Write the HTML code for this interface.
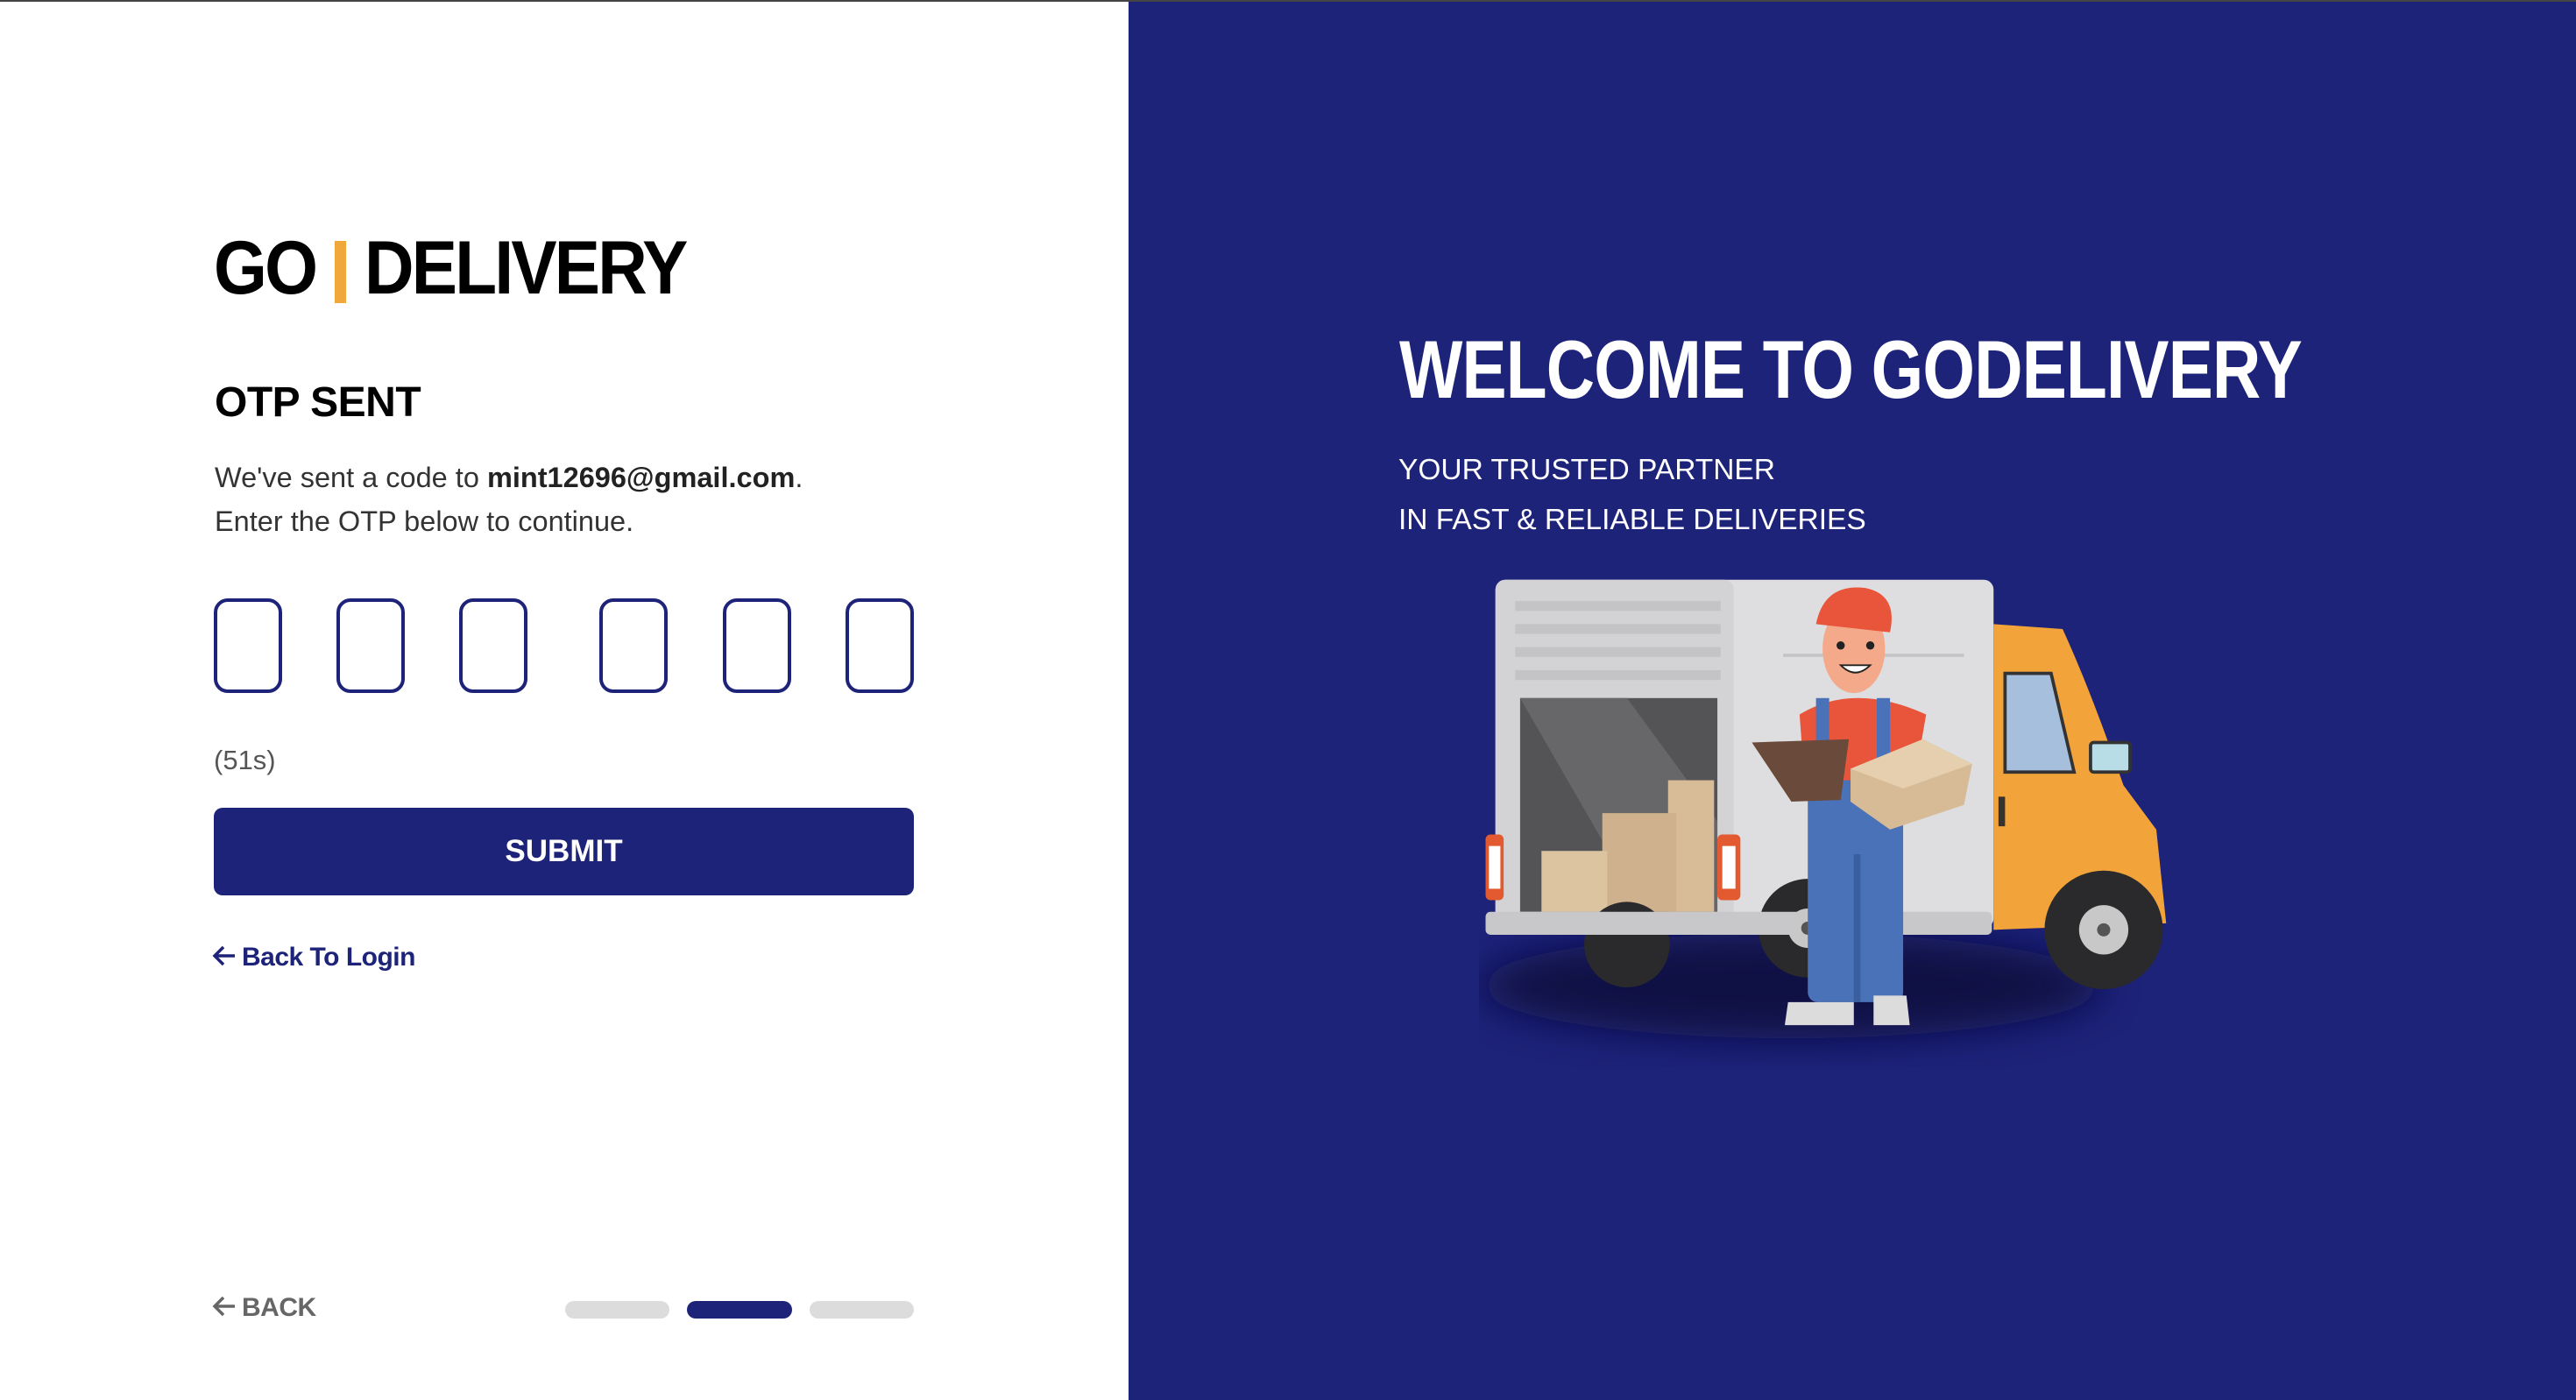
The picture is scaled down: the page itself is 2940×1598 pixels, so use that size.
<!DOCTYPE html>
<html><head><meta charset="utf-8"><style>
*{margin:0;padding:0;box-sizing:border-box}
body{width:2940px;height:1598px;position:relative;overflow:hidden;background:#fff;font-family:"Liberation Sans",Arial,sans-serif}
.topline{position:absolute;left:0;top:0;width:2940px;height:2px;background:#444}
.left{position:absolute;left:0;top:2px;width:1288px;height:1596px;background:#fff}
.right{position:absolute;left:1288px;top:2px;width:1652px;height:1596px;background:#1e237a}
.abs{position:absolute;white-space:nowrap}
.logo{left:244px;top:254px;font-size:86px;font-weight:bold;color:#000;letter-spacing:-3px;transform:scaleX(0.91);transform-origin:left top;line-height:100px}
.bar{position:absolute;left:382px;top:273px;width:13px;height:71px;background:#f0a83a}
.box{position:absolute;top:681px;width:78px;height:108px;border:4px solid #1e237a;border-radius:16px}
.arr{display:inline-block;vertical-align:middle;margin-right:6px;margin-top:-6px}
</style></head><body>
<div class="topline"></div>
<div class="left">
  <div class="abs logo" style="left:244px"><span>GO</span></div>
  <div class="bar"></div>
  <div class="abs logo" style="left:416px">DELIVERY</div>
  <div class="abs" style="left:245px;top:430px;font-size:48px;font-weight:bold;color:#000;letter-spacing:-0.5px">OTP SENT</div>
  <div class="abs" style="left:245px;top:518px;font-size:32.5px;color:#333;line-height:50px">We've sent a code to <b style="color:#222">mint12696@gmail.com</b>.<br>Enter the OTP below to continue.</div>
  <div class="box" style="left:244px"></div>
  <div class="box" style="left:384px"></div>
  <div class="box" style="left:524px"></div>
  <div class="box" style="left:684px"></div>
  <div class="box" style="left:825px"></div>
  <div class="box" style="left:965px"></div>
  <div class="abs" style="left:244px;top:848px;font-size:31px;color:#555">(51s)</div>
  <div class="abs" style="left:244px;top:920px;width:799px;height:100px;background:#1e237a;border-radius:10px;color:#fff;font-size:35px;font-weight:bold;text-align:center;line-height:100px">SUBMIT</div>
  <div class="abs" style="left:242px;top:1074px;font-size:30px;font-weight:bold;color:#1e237a;letter-spacing:-0.5px"><svg class="arr" width="28" height="26" viewBox="0 0 28 26"><path d="M26 13H4M13 3L3 13l10 10" fill="none" stroke="#1e237a" stroke-width="3.5"/></svg>Back To Login</div>
  <div class="abs" style="left:242px;top:1474px;font-size:30px;font-weight:bold;color:#666;letter-spacing:-0.5px"><svg class="arr" width="28" height="26" viewBox="0 0 28 26"><path d="M26 13H4M13 3L3 13l10 10" fill="none" stroke="#666" stroke-width="3.5"/></svg>BACK</div>
  <div class="abs" style="left:645px;top:1483px;width:119px;height:20px;border-radius:10px;background:#dcdcdc"></div>
  <div class="abs" style="left:784px;top:1483px;width:120px;height:20px;border-radius:10px;background:#1e237a"></div>
  <div class="abs" style="left:924px;top:1483px;width:119px;height:20px;border-radius:10px;background:#dcdcdc"></div>
</div>
<div class="right">
  <div class="abs" style="left:309px;top:366px;font-size:94px;font-weight:bold;color:#fff;letter-spacing:-1px;transform:scaleX(0.815);transform-origin:left top">WELCOME TO GODELIVERY</div>
  <div class="abs" style="left:308px;top:506px;font-size:33.5px;color:#fff;line-height:57px">YOUR TRUSTED PARTNER<br>IN FAST &amp; RELIABLE DELIVERIES</div>
</div>
<svg style="position:absolute;left:1688px;top:656px" width="788" height="563" viewBox="900 350 420 300">
  <defs><filter id="b" x="-50%" y="-50%" width="200%" height="200%"><feGaussianBlur stdDeviation="12"/></filter></defs>
  <ellipse cx="1090" cy="600" rx="190" ry="32" fill="#0a0d3a" opacity="0.85" filter="url(#b)"/>
  <rect x="910" y="353" width="303" height="212" rx="6" fill="#dedee0"/>
  <rect x="910" y="353" width="145" height="212" rx="6" fill="#d3d3d5"/>
  <g fill="#c4c4c6"><rect x="922" y="366" width="125" height="6"/><rect x="922" y="380" width="125" height="6"/><rect x="922" y="394" width="125" height="6"/><rect x="922" y="408" width="125" height="6"/></g>
  <rect x="1085" y="398" width="110" height="2" fill="#c4c4c6"/>
  <rect x="925" y="425" width="120" height="130" fill="#545456"/>
  <polygon points="925,425 990,425 1045,500 1045,555 1000,555" fill="#676769"/>
  <rect x="1015" y="475" width="28" height="80" fill="#d8bc98"/>
  <rect x="975" y="495" width="45" height="60" fill="#cfb28d"/>
  <rect x="938" y="518" width="40" height="37" fill="#dcc4a0"/>
  <rect x="904" y="508" width="11" height="40" rx="3" fill="#e35a30"/><rect x="906" y="515" width="7" height="26" fill="#fff"/>
  <rect x="1045" y="508" width="14" height="40" rx="3" fill="#e35a30"/><rect x="1048" y="515" width="8" height="26" fill="#fff"/>
  <g fill="#2a2a2c"><circle cx="990" cy="575" r="26"/><circle cx="1100" cy="565" r="30"/><circle cx="1280" cy="566" r="36"/></g>
  <rect x="904" y="555" width="308" height="14" rx="3" fill="#c8c8ca"/>
  <path d="M1213 380 L1255 383 Q1272 420 1292 478 L1312 505 L1318 562 L1213 566 Z" fill="#f2a33a"/>
  <circle cx="1280" cy="566" r="36" fill="#2a2a2c"/>
  <path d="M1220 410 L1248 410 L1262 470 L1220 470 Z" fill="#a6bfdc" stroke="#333" stroke-width="2"/>
  <rect x="1272" y="452" width="24" height="18" rx="2" fill="#b9dde6" stroke="#333" stroke-width="2"/>
  <rect x="1216" y="485" width="4" height="18" fill="#333"/>
  <g fill="#c8c8c8"><circle cx="1280" cy="566" r="15"/><circle cx="1100" cy="565" r="12"/></g>
  <g fill="#555"><circle cx="1280" cy="566" r="4"/><circle cx="1100" cy="565" r="4"/></g>
  <rect x="1100" y="470" width="58" height="140" rx="6" fill="#4a72b8"/>
  <rect x="1128" y="520" width="4" height="90" fill="#3a5f9e"/>
  <path d="M1095 435 Q1128 415 1172 435 L1165 475 L1098 475 Z" fill="#e8553a"/>
  <rect x="1105" y="425" width="8" height="50" fill="#4a72b8"/><rect x="1142" y="425" width="8" height="50" fill="#4a72b8"/>
  <ellipse cx="1128" cy="395" rx="19" ry="27" fill="#f4a98a"/>
  <path d="M1105 380 Q1110 355 1135 358 Q1155 362 1150 385 Z" fill="#e8553a"/>
  <circle cx="1120" cy="393" r="2.5" fill="#222"/><circle cx="1138" cy="393" r="2.5" fill="#222"/>
  <path d="M1120 405 Q1129 414 1138 405 Z" fill="#fff" stroke="#222" stroke-width="1"/>
  <polygon points="1066,452 1125,450 1120,487 1090,488" fill="#6a4a3a"/>
  <polygon points="1126,468 1170,450 1200,465 1195,490 1150,505 1126,488" fill="#d6bb96"/>
  <polygon points="1126,468 1170,450 1200,465 1158,480" fill="#e6cfae"/>
  <path d="M1088 610 L1128 610 L1128 624 L1086 624 Z" fill="#dcdcdc"/>
  <path d="M1140 606 L1160 606 L1162 624 L1140 624 Z" fill="#dcdcdc"/>
</svg>
</body></html>
